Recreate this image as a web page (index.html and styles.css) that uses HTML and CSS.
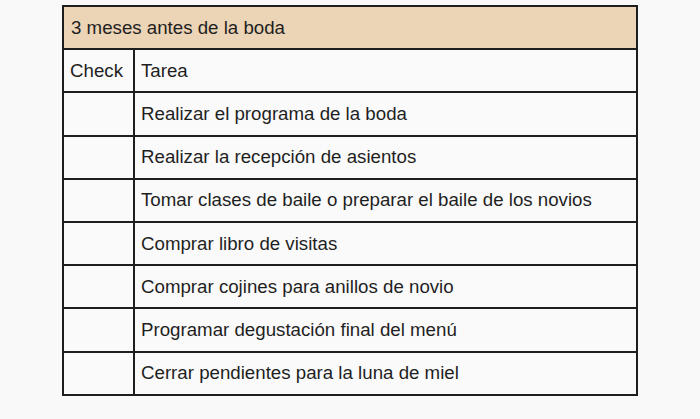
FILE: index.html
```html
<!DOCTYPE html>
<html lang="es">
<head>
<meta charset="utf-8">
<title>3 meses antes de la boda</title>
<link rel="stylesheet" href="styles.css">
</head>
<body>
<div class="page">
<table class="checklist">
  <tr class="title-row"><td colspan="2">3 meses antes de la boda</td></tr>
  <tr><td class="check">Check</td><td>Tarea</td></tr>
  <tr><td class="check"></td><td>Realizar el programa de la boda</td></tr>
  <tr><td class="check"></td><td>Realizar la recepción de asientos</td></tr>
  <tr><td class="check"></td><td>Tomar clases de baile o preparar el baile de los novios</td></tr>
  <tr><td class="check"></td><td>Comprar libro de visitas</td></tr>
  <tr><td class="check"></td><td>Comprar cojines para anillos de novio</td></tr>
  <tr><td class="check"></td><td>Programar degustación final del menú</td></tr>
  <tr><td class="check"></td><td>Cerrar pendientes para la luna de miel</td></tr>
</table>
</div>
</body>
</html>
```
FILE: styles.css
```css
html, body {
  margin: 0;
  background: #f9f9f9;
}
.page {
  padding: 5px 0 0 62px;
}
.checklist {
  border-collapse: collapse;
  width: 576px;
  font-family: "Liberation Sans", Arial, sans-serif;
  font-size: 18.7px;
  color: #1f1f1f;
}
.checklist td {
  border: 2px solid #1e1e1e;
  height: 41.2px;
  padding: 0 0 0 6px;
  vertical-align: middle;
  background: #fafafa;
}
.checklist td.check {
  width: 63px;
}
.title-row td {
  background: #ecd4b6;
  padding-left: 7px;
}
```
